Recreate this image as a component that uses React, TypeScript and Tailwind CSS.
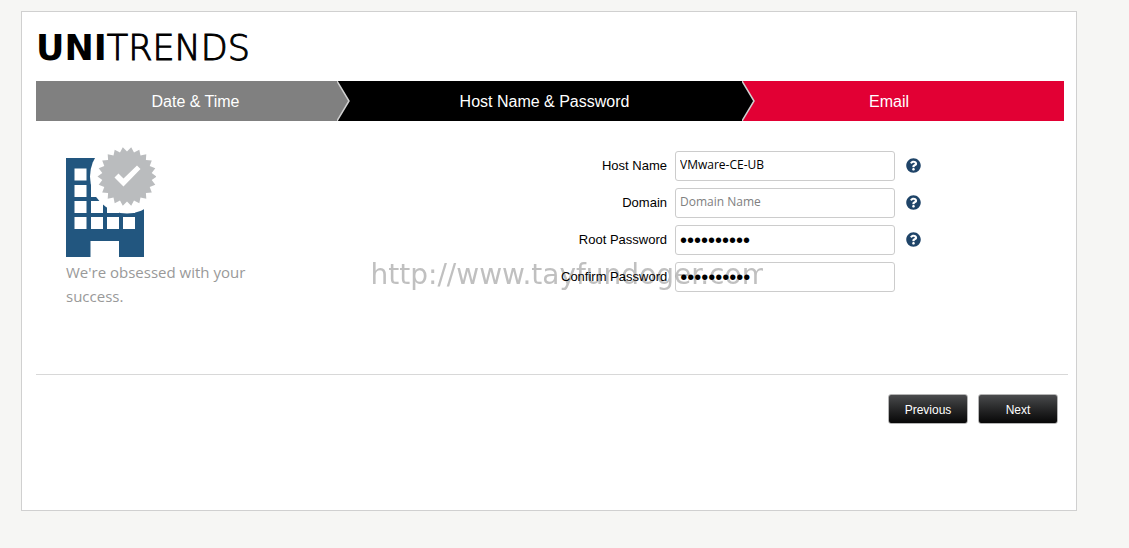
import { useState } from "react";
import type { ReactNode } from "react";
import { FaQuestionCircle } from "react-icons/fa";

// --- Badge geometry: 22 teeth around (61, 29.5) ---
const badgePoints = Array.from({ length: 44 }, (_, i) => {
    const radius = i % 2 === 0 ? 29.5 : 25;
    const angle = ((i + 1) * Math.PI) / 22 - Math.PI / 2;
    return `${(61 + radius * Math.cos(angle)).toFixed(1)},${(29.5 + radius * Math.sin(angle)).toFixed(1)}`;
}).join(" ");

const windowCols = [8.5, 25, 41, 57];
const windowRows = [21.5, 38, 54, 70];

function BuildingIcon() {
    return (
        <svg width="90" height="110" viewBox="0 0 90 110" aria-hidden="true">
            <rect y="11" width="78" height="99" fill="#22567f" />
            {windowRows.map((y) =>
                windowCols.map((x) => <rect key={`${x}-${y}`} x={x} y={y} width="12" height="12" fill="#fff" />)
            )}
            <rect x="24.5" y="94" width="28.5" height="16" fill="#fff" />
            <circle cx="61" cy="29.5" r="37" fill="#fff" />
            <polygon points={badgePoints} fill="#babcbe" />
            <polygon points="48.5,30.5 52.5,26.5 57.5,31.5 71,18.5 74.5,22 57.5,39.5" fill="#fff" />
        </svg>
    );
}

function StepArrow({ fill }: { fill: string }) {
    return (
        <svg className="absolute top-0 left-full z-10" width="13" height="40" viewBox="0 0 13 40" aria-hidden="true">
            <polygon points="0,0 12,20 0,40" fill={fill} />
            <polyline points="0,0 12,20 0,40" fill="none" stroke="#d0d0d0" strokeWidth="1.5" />
        </svg>
    );
}

function Field({ id, label, help, children }: { id: string; label: string; help?: boolean; children: ReactNode }) {
    return (
        <div className="flex items-center">
            <label htmlFor={id} className="flex-1 pr-2 text-right text-[13px] whitespace-nowrap">
                {label}
            </label>
            {children}
            <div className="ml-[11px] flex w-[15px] pb-0.5">
                {help && (
                    <button type="button" aria-label={`Help for ${label}`} className="text-[#1f4468]">
                        <FaQuestionCircle size={15} />
                    </button>
                )}
            </div>
        </div>
    );
}

const inputClass =
    "h-[30px] w-[220px] rounded-[3px] border border-[#ccc] bg-white px-1 pb-1 font-['Open_Sans',sans-serif] text-[12px] text-black outline-none placeholder:text-[#808080]";
const passwordClass =
    "h-[30px] w-[220px] rounded-[3px] border border-[#ccc] bg-white px-1 font-['Liberation_Sans',sans-serif] text-[20px] text-black outline-none";
const buttonClass =
    "h-[30px] w-20 rounded-[3px] border border-[#b5b5b5] bg-linear-to-b from-[#4a4b4d] to-[#080808] pt-0.5 text-[12px] text-white";

export default function App() {
    const [hostName, setHostName] = useState("VMware-CE-UB");
    const [domain, setDomain] = useState("");
    const [rootPassword, setRootPassword] = useState("unitrends1");
    const [confirmPassword, setConfirmPassword] = useState("unitrends1");

    return (
        <div className="min-h-screen bg-[#f6f6f4] pt-[11px] pr-[52px] pb-9 pl-[21px] font-['Liberation_Sans',Arial,sans-serif] text-black">
            <main className="min-h-[500px] border border-[#d0d0d0] bg-white pt-4 pr-2 pl-[14px]">
                <h1 className="flex h-10 items-center font-['DejaVu_Sans',sans-serif] text-[35px] leading-10">
                    <span className="font-bold">UNI</span>
                    <span className="font-extralight [-webkit-text-stroke:1px_black]">TRENDS</span>
                </h1>

                {/* --- Wizard steps --- */}
                <ol className="mt-[13px] mr-1 grid h-10 grid-cols-[301fr_405fr_322fr] text-center text-base leading-[42px] text-white">
                    <li className="relative h-10 bg-[#808080] pl-[18px]">
                        Date &amp; Time
                        <StepArrow fill="#808080" />
                    </li>
                    <li className="relative h-10 bg-black pl-[10px]" aria-current="step">
                        Host Name &amp; Password
                        <StepArrow fill="#000" />
                    </li>
                    <li className="h-10 bg-[#e20034] pr-7">Email</li>
                </ol>

                <form onSubmit={(e) => e.preventDefault()}>
                    <div className="flex min-h-[254px] justify-between border-b border-[#d8d8d8] pr-[147px] pl-[30px]">
                        <div className="w-[200px] pt-[26px]">
                            <BuildingIcon />
                            <p className="mt-[3px] font-['Open_Sans',sans-serif] text-[15px] leading-6 text-[#999]">
                                We're obsessed with your success.
                            </p>
                        </div>

                        <div className="flex w-[360px] flex-col gap-[7px] pt-[30px]">
                            <Field id="host" label="Host Name" help>
                                <input id="host" type="text" className={inputClass} value={hostName} onChange={(e) => setHostName(e.target.value)} />
                            </Field>
                            <Field id="domain" label="Domain" help>
                                <input id="domain" type="text" placeholder="Domain Name" className={inputClass} value={domain} onChange={(e) => setDomain(e.target.value)} />
                            </Field>
                            <Field id="root-password" label="Root Password" help>
                                <input id="root-password" type="password" className={passwordClass} value={rootPassword} onChange={(e) => setRootPassword(e.target.value)} />
                            </Field>
                            <Field id="confirm-password" label="Confirm Password">
                                <input id="confirm-password" type="password" className={passwordClass} value={confirmPassword} onChange={(e) => setConfirmPassword(e.target.value)} />
                            </Field>
                        </div>
                    </div>

                    <div className="flex justify-end gap-[10px] pt-[19px] pr-[10px]">
                        <button type="button" className={buttonClass}>Previous</button>
                        <button type="submit" className={buttonClass}>Next</button>
                    </div>
                </form>
            </main>

            {/* --- Watermark --- */}
            <div className="pointer-events-none fixed inset-0 z-20 flex items-center justify-center pt-0.5 pl-1 mix-blend-multiply">
                <span className="max-w-[392px] overflow-hidden font-['DejaVu_Sans',sans-serif] text-[28px] whitespace-nowrap text-[#c0c0c0]">
                    http://www.tayfundoger.com
                </span>
            </div>
        </div>
    );
}
